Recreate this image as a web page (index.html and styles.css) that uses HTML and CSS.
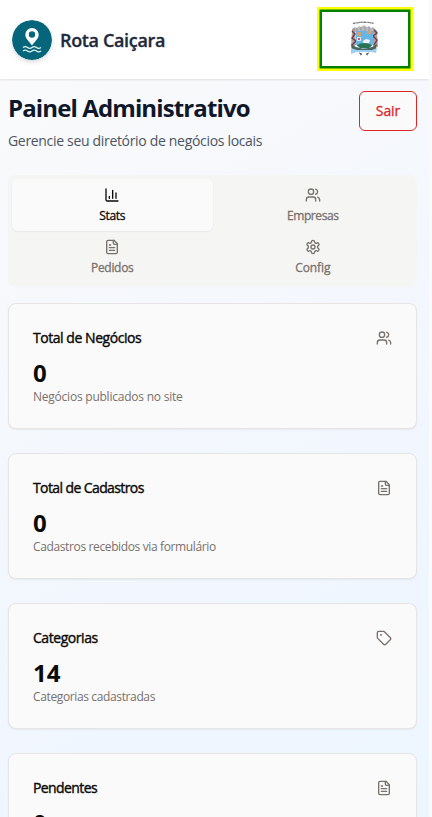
FILE: index.html
```html
<!DOCTYPE html>
<html lang="pt-BR">
<head>
<meta charset="utf-8">
<title>Rota Caiçara</title>
<link rel="stylesheet" href="styles.css">
</head>
<body>
<svg class="sprite" width="0" height="0" aria-hidden="true">
  <symbol id="users" viewBox="0 0 24 24"><path d="M16 21v-2a4 4 0 0 0-4-4H6a4 4 0 0 0-4 4v2"/><circle cx="9" cy="7" r="4"/><path d="M22 21v-2a4 4 0 0 0-3-3.87M16 3.13a4 4 0 0 1 0 7.75"/></symbol>
  <symbol id="file" viewBox="0 0 24 24"><path d="M15 2H6a2 2 0 0 0-2 2v16a2 2 0 0 0 2 2h12a2 2 0 0 0 2-2V7Z"/><path d="M14 2v4a2 2 0 0 0 2 2h4M10 9H8M16 13H8M16 17H8"/></symbol>
  <symbol id="tag" viewBox="0 0 24 24"><path d="M12.586 2.586A2 2 0 0 0 11.172 2H4a2 2 0 0 0-2 2v7.172a2 2 0 0 0 .586 1.414l8.704 8.704a2.426 2.426 0 0 0 3.42 0l6.58-6.58a2.426 2.426 0 0 0 0-3.42z"/><circle cx="7.5" cy="7.5" r=".5" fill="currentColor"/></symbol>
  <symbol id="chart" viewBox="0 0 24 24"><path d="M3 3v16a2 2 0 0 0 2 2h16M18 17V9M13 17V5M8 17v-3"/></symbol>
  <symbol id="gear" viewBox="0 0 24 24"><path d="M12.22 2h-.44a2 2 0 0 0-2 2v.18a2 2 0 0 1-1 1.73l-.43.25a2 2 0 0 1-2 0l-.15-.08a2 2 0 0 0-2.73.73l-.22.38a2 2 0 0 0 .73 2.73l.15.1a2 2 0 0 1 1 1.72v.51a2 2 0 0 1-1 1.74l-.15.09a2 2 0 0 0-.73 2.73l.22.38a2 2 0 0 0 2.73.73l.15-.08a2 2 0 0 1 2 0l.43.25a2 2 0 0 1 1 1.73V20a2 2 0 0 0 2 2h.44a2 2 0 0 0 2-2v-.18a2 2 0 0 1 1-1.73l.43-.25a2 2 0 0 1 2 0l.15.08a2 2 0 0 0 2.73-.73l.22-.39a2 2 0 0 0-.73-2.73l-.15-.08a2 2 0 0 1-1-1.74v-.5a2 2 0 0 1 1-1.74l.15-.09a2 2 0 0 0 .73-2.73l-.22-.38a2 2 0 0 0-2.73-.73l-.15.08a2 2 0 0 1-2 0l-.43-.25a2 2 0 0 1-1-1.73V4a2 2 0 0 0-2-2z"/><circle cx="12" cy="12" r="3"/></symbol>
</svg>
<div class="page">
  <header class="topbar">
    <div class="brand">
      <svg class="logo" viewBox="0 0 40 40">
        <circle cx="20" cy="20" r="20" fill="#05667b"/>
        <path fill="#fff" fill-rule="evenodd" d="M20 8a6.700 6.700 0 0 0-6.700 6.700c0 4.200 4.600 7.200 6.700 10.700c2.100-3.500 6.700-6.500 6.700-10.700A6.700 6.700 0 0 0 20 8Zm0 3.300a3.200 3.200 0 1 1 0 6.400a3.200 3.200 0 0 1 0-6.400Z"/>
        <path fill="none" stroke="#e4f4f5" stroke-width="1.300" d="M11 27.500q2.300-1.800 4.500 0t4.500 0t4.500 0t4.500 0M11 31q2.300-1.800 4.500 0t4.500 0t4.500 0t4.500 0"/>
      </svg>
      <span class="brand-name">Rota Caiçara</span>
    </div>
    <div class="flag">
      <svg class="crest" viewBox="0 0 30 38">
        <path d="M4 4.500Q15 2 25 4.500" fill="none" stroke="#777" stroke-width="1.300" stroke-dasharray="2 .4 1 .3"/>
        <path d="M6 8l2 1 2-2 2 1 3-2 3 2 2-1 2 2 2-1v5H6z" fill="#b9bbbf"/>
        <path d="M8 9v3M12 8v4M16 8v4M20 8v4" stroke="#858890" stroke-width=".8"/>
        <path d="M3 10l3-2 1 18-5 3zM24 8l4 4 1 16-5-1z" fill="#b39d9d"/>
        <path d="M3 12l3 3-3 4 4 3-4 4M25 11l3 3-4 3 4 4-3 5" fill="none" stroke="#713c48" stroke-width="1.400"/>
        <path d="M7 12h17v13q-1 4-8.500 5Q8 29 7 25z" fill="#66b5e4"/>
        <path d="M8 13h4v4H8zM18 12h4v3h-4z" fill="#d9a072"/>
        <path d="M8 18h4v4H8z" fill="#dceaf5"/><path d="M9 19h2v2H9z" fill="#d65b67"/>
        <path d="M14 22l3-2 4 1-1 3-6 1z" fill="#f3f6fa"/>
        <path d="M8 26q7-4 15 0l-3 3H11z" fill="#287651"/>
        <path d="M2 25l5 3 8 2 8-2 5-3-1 5-5 2H8l-5-2z" fill="#4d635c"/>
        <path d="M2 29l6 2h15l5-2-1 5-5-1H8l-6 2z" fill="#9ccff1"/>
        <path d="M10 34l3 1-2 1M20 34l-3 1 2 1" stroke="#596068" fill="none"/>
      </svg>
    </div>
  </header>
  <main class="content">
    <section class="intro">
      <div>
        <h1 class="title">Painel Administrativo</h1>
        <p class="subtitle">Gerencie seu diretório de negócios locais</p>
      </div>
      <button class="logout">Sair</button>
    </section>
    <nav class="tabs">
      <a class="tab active"><svg class="icon"><use href="#chart"/></svg><span>Stats</span></a>
      <a class="tab"><svg class="icon"><use href="#users"/></svg><span class="tight">Empresas</span></a>
      <a class="tab"><svg class="icon"><use href="#file"/></svg><span>Pedidos</span></a>
      <a class="tab"><svg class="icon"><use href="#gear"/></svg><span class="loose">Config</span></a>
    </nav>
    <section class="cards">
      <article class="card">
        <div class="card-head"><h2>Total de Negócios</h2><svg class="icon"><use href="#users"/></svg></div>
        <div class="value">0</div><p class="note loose">Negócios publicados no site</p>
      </article>
      <article class="card">
        <div class="card-head"><h2 class="tight">Total de Cadastros</h2><svg class="icon"><use href="#file"/></svg></div>
        <div class="value">0</div><p class="note">Cadastros recebidos via formulário</p>
      </article>
      <article class="card">
        <div class="card-head"><h2>Categorias</h2><svg class="icon"><use href="#tag"/></svg></div>
        <div class="value">14</div><p class="note">Categorias cadastradas</p>
      </article>
      <article class="card">
        <div class="card-head"><h2 class="tight">Pendentes</h2><svg class="icon"><use href="#file"/></svg></div>
        <div class="value">0</div>
      </article>
    </section>
  </main>
</div>
</body>
</html>
```
FILE: styles.css
```css
* { box-sizing: border-box; margin: 0; }
html { height: 100%; }
body { height: 817px; overflow: hidden; background: #fafafa; font-family: "Open Sans", "Noto Sans", sans-serif; color: #0c0a09; }
.sprite { display: block; position: absolute; }
.page { width: 429px; height: 817px; overflow: hidden; background: linear-gradient(150deg, #fafafa 0%, #f0f6ff 75%, #ecf6ff 110%); }
.topbar { height: 79px; padding: 0 16px 0 12px; display: flex; align-items: center; justify-content: space-between; background: #fff; box-shadow: 0 1px 2px rgba(0,0,0,.1); }
.brand { display: flex; align-items: center; gap: 8px; }
.logo { width: 40px; height: 40px; border-radius: 50%; box-shadow: 0 2px 4px rgba(0,0,0,.15); }
.brand-name { font-size: 18px; line-height: 28px; font-weight: 600; color: #1e293b; letter-spacing: -.35px; -webkit-text-stroke: .3px; }
.flag { width: 96px; height: 64px; margin-bottom: 1px; box-shadow: inset 0 0 0 2.5px #ff0, inset 0 0 0 5px #008000; background: #fff; display: flex; align-items: center; justify-content: center; }
.crest { width: 30px; height: 38px; margin-top: -3px; margin-right: 2px; }
.content { padding: 12px 12px 0 8px; }
.intro { display: flex; justify-content: space-between; align-items: flex-start; height: 84px; }
.title { font-size: 24px; line-height: 34px; font-weight: 700; color: #0f172a; letter-spacing: -.88px; white-space: nowrap; }
.subtitle { font-size: 14px; line-height: 20px; margin-top: 6px; color: #4b5563; letter-spacing: -.32px; white-space: nowrap; }
.logout { width: 58px; height: 40px; padding: 0; border: 1px solid #dc2626; border-radius: 6px; background: #fafafa; color: #dc2626; font: 500 14px/20px "Open Sans", "Noto Sans", sans-serif; -webkit-text-stroke: .3px; letter-spacing: -.1px; }
.tabs { height: 112px; padding: 4px; display: grid; grid-template-columns: 1fr 1fr; grid-template-rows: 52px 52px; background: #f5f5f4; border-radius: 8px; color: #78716c; }
.tab { display: flex; flex-direction: column; align-items: center; gap: 5px; padding-top: 8px; font-size: 12px; line-height: 16px; font-weight: 500; letter-spacing: -.3px; -webkit-text-stroke: .3px; }
.tab .tight { letter-spacing: -.4px; }
.tab .loose { letter-spacing: -.1px; }
.tab.active { background: #fafafa; color: #0c0a09; border-radius: 6px; box-shadow: 0 1px 2px rgba(0,0,0,.06); }
.icon { width: 16px; height: 16px; display: block; fill: none; stroke: currentColor; stroke-width: 2; stroke-linecap: round; stroke-linejoin: round; -webkit-text-stroke: 0; }
.cards { display: grid; gap: 24px; margin-top: 16px; }
.card { height: 126px; padding: 24px; border: 1px solid #e7e5e4; border-radius: 8px; background: #fafafa; box-shadow: 0 1px 2px rgba(0,0,0,.06); }
.card-head { display: flex; align-items: center; justify-content: space-between; height: 20px; margin-bottom: 9px; }
.card-head h2 { font-size: 14px; line-height: 20px; font-weight: 500; letter-spacing: -.45px; -webkit-text-stroke: .4px; }
.card-head h2.tight { letter-spacing: -.6px; }
.card-head .icon { color: #78716c; }
.value { font-size: 24px; line-height: 32px; font-weight: 700; }
.note { font-size: 12px; line-height: 16px; color: #78716c; letter-spacing: -.37px; }
.note.loose { letter-spacing: -.23px; }
```
